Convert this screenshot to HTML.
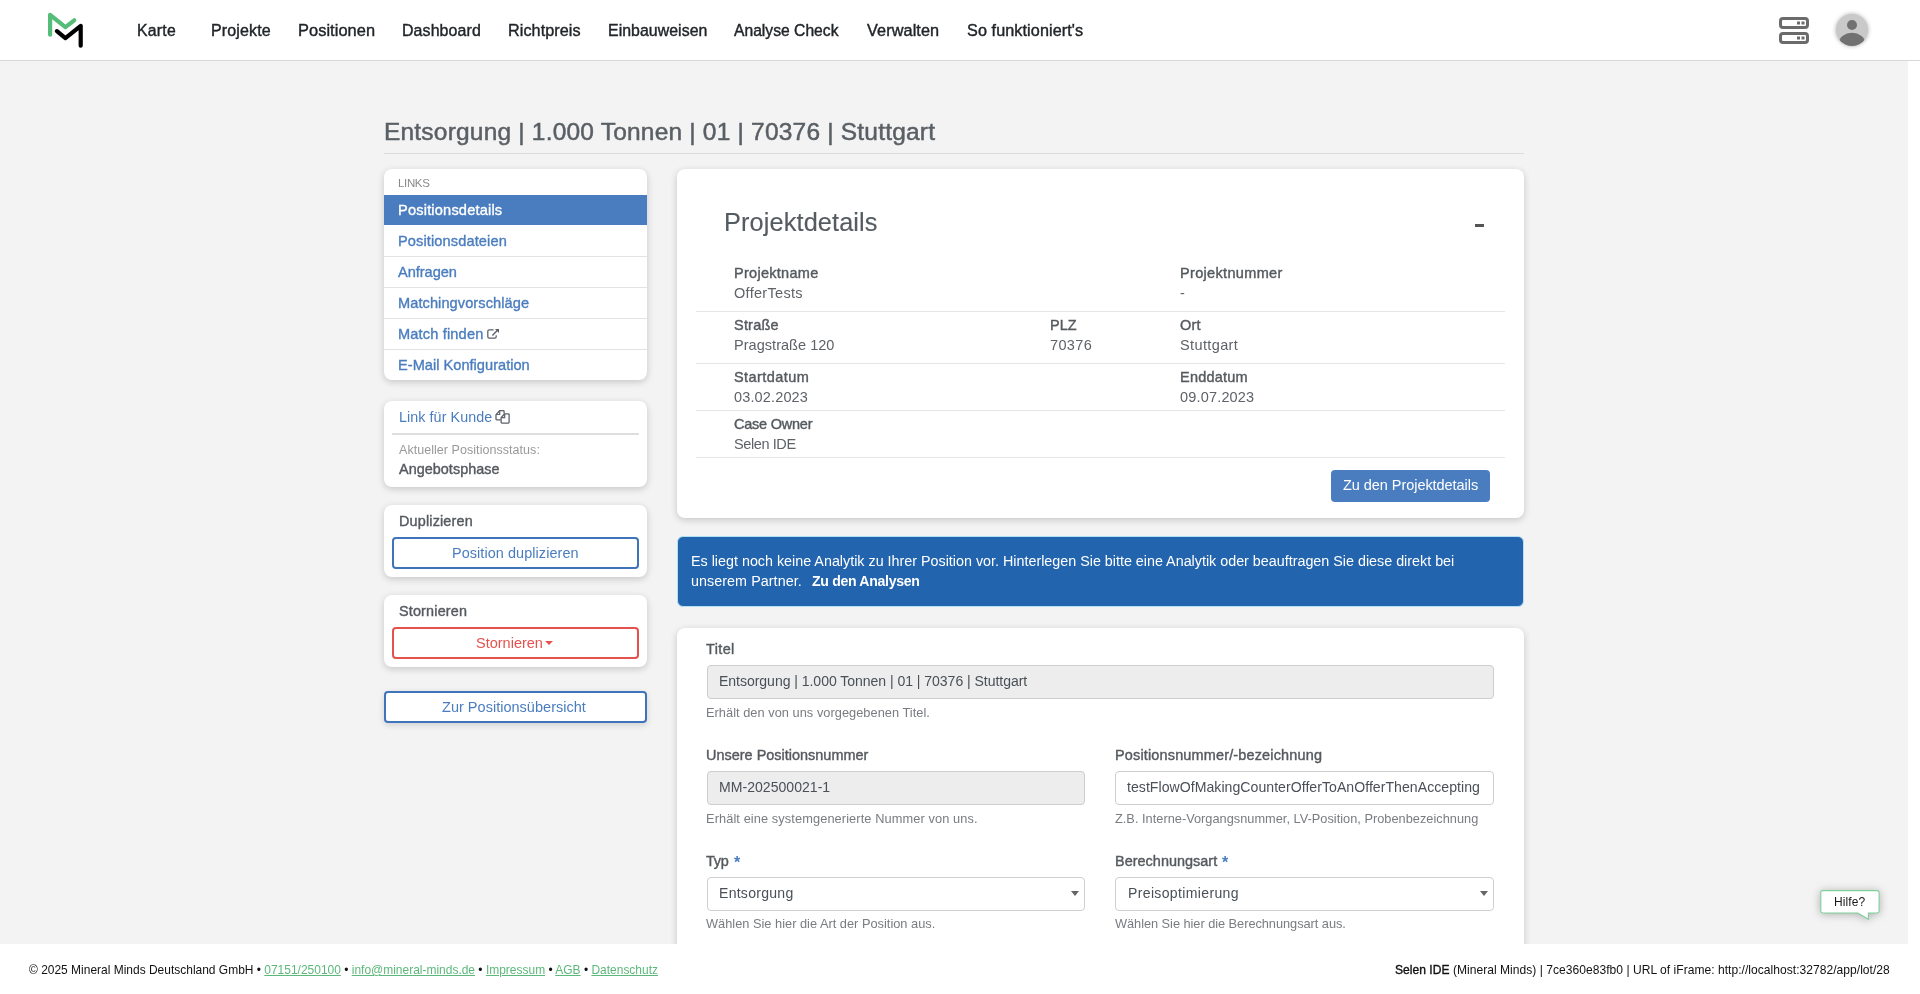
<!DOCTYPE html>
<html><head><meta charset="utf-8"><title>Positionsdetails</title>
<style>
html,body{margin:0;padding:0;width:1920px;height:994px;overflow:hidden;background:#fff;}
body{position:relative;font-family:"Liberation Sans",sans-serif;}
.r{position:absolute;}
.t{position:absolute;white-space:nowrap;line-height:1;will-change:transform;}
.b{display:inline-block;width:0;height:0;}
.t a{color:#5cb87a;text-decoration:underline;}
</style></head><body>
<div class="r" style="left:0px;top:0px;width:1920px;height:60px;background:#fff;"></div>
<div class="r" style="left:0px;top:60px;width:1920px;height:1px;background:#d8d8d8;"></div>
<svg class="r" style="left:40px;top:5px" width="60" height="50" viewBox="40 5 60 50">
<polyline points="50.1,34.7 50.1,14.8 65.4,27.1 74.2,20.3" fill="none" stroke="#55bd78" stroke-width="4.2" stroke-linecap="round" stroke-linejoin="round"/>
<polyline points="56.9,31.2 65.4,38.2 80.7,25.9 80.7,45.7" fill="none" stroke="#000" stroke-width="4.2" stroke-linecap="round" stroke-linejoin="round"/>
</svg>
<div class="t" id="t0" style="left:137.35px;top:23.01px;font-size:15.800px;color:#212529;letter-spacing:0.246px;-webkit-text-stroke:0.4px #212529;">Karte<i class="b"></i></div>
<div class="t" id="t1" style="left:210.60px;top:22.00px;font-size:16.050px;color:#212529;letter-spacing:0.122px;-webkit-text-stroke:0.4px #212529;">Projekte<i class="b"></i></div>
<div class="t" id="t2" style="left:297.80px;top:22.01px;font-size:16.400px;color:#212529;letter-spacing:0.054px;-webkit-text-stroke:0.4px #212529;">Positionen<i class="b"></i></div>
<div class="t" id="t3" style="left:401.90px;top:23.01px;font-size:15.950px;color:#212529;letter-spacing:0.098px;-webkit-text-stroke:0.4px #212529;">Dashboard<i class="b"></i></div>
<div class="t" id="t4" style="left:507.80px;top:22.01px;font-size:16.200px;color:#212529;letter-spacing:0.067px;-webkit-text-stroke:0.4px #212529;">Richtpreis<i class="b"></i></div>
<div class="t" id="t5" style="left:607.80px;top:23.00px;font-size:15.880px;color:#212529;letter-spacing:0.046px;-webkit-text-stroke:0.4px #212529;">Einbauweisen<i class="b"></i></div>
<div class="t" id="t6" style="left:734.40px;top:23.01px;font-size:15.650px;color:#212529;letter-spacing:0.011px;-webkit-text-stroke:0.4px #212529;">Analyse Check<i class="b"></i></div>
<div class="t" id="t7" style="left:867.35px;top:22.00px;font-size:16.300px;color:#212529;letter-spacing:0.083px;-webkit-text-stroke:0.4px #212529;">Verwalten<i class="b"></i></div>
<div class="t" id="t8" style="left:967.35px;top:22.01px;font-size:16.200px;color:#212529;letter-spacing:0.089px;-webkit-text-stroke:0.4px #212529;">So funktioniert&#x27;s<i class="b"></i></div>
<svg class="r" style="left:1770px;top:10px" width="50" height="40" viewBox="1770 10 50 40">
<rect x="1780.5" y="18.5" width="27" height="9" rx="2.5" fill="none" stroke="#6b6b6b" stroke-width="3"/>
<rect x="1780.5" y="33.5" width="27" height="9" rx="2.5" fill="none" stroke="#6b6b6b" stroke-width="3"/>
<rect x="1797" y="21.5" width="3" height="3" fill="#6b6b6b"/><rect x="1801.5" y="21.5" width="3" height="3" fill="#6b6b6b"/>
<rect x="1797" y="36.5" width="3" height="3" fill="#6b6b6b"/><rect x="1801.5" y="36.5" width="3" height="3" fill="#6b6b6b"/>
</svg>
<div class="r" style="left:1836px;top:14px;width:32px;height:32px;border-radius:50%;box-shadow:0 0 4px rgba(0,0,0,0.35);background:#c9c9c9;overflow:hidden">
<svg width="32" height="32" viewBox="0 0 32 32"><circle cx="16" cy="11" r="5" fill="#717171"/><ellipse cx="16" cy="28.5" rx="13" ry="9.7" fill="#717171"/></svg></div>
<div class="r" style="left:0px;top:61px;width:1908px;height:883px;background:#f3f3f3;overflow:hidden;"></div>
<div class="t" id="t9" style="left:383.60px;top:120.00px;font-size:24.500px;color:#595f64;letter-spacing:0.198px;-webkit-text-stroke:0.5px #595f64;">Entsorgung | 1.000 Tonnen | 01 | 70376 | Stuttgart<i class="b"></i></div>
<div class="r" style="left:384px;top:153px;width:1140px;height:1px;background:#dcdcdc;"></div>
<div class="r" style="left:384px;top:169px;width:263px;height:211px;background:#fff;border-radius:8px;box-shadow:0 2px 7px rgba(0,0,0,0.19);"></div>
<div class="t" id="t10" style="left:398.20px;top:178.01px;font-size:11.500px;color:#8a8a8a;letter-spacing:-0.342px;">LINKS<i class="b"></i></div>
<div class="r" style="left:384px;top:195px;width:263px;height:30px;background:#4a7dbf;"></div>
<div class="t" id="t11" style="left:398.00px;top:203.00px;font-size:14.600px;color:#fff;letter-spacing:0.184px;-webkit-text-stroke:0.35px #fff;">Positionsdetails<i class="b"></i></div>
<div class="t" id="t12" style="left:398.00px;top:234.00px;font-size:14.600px;color:#4a7dbf;letter-spacing:0.114px;-webkit-text-stroke:0.35px #4a7dbf;">Positionsdateien<i class="b"></i></div>
<div class="r" style="left:384px;top:256px;width:263px;height:1px;background:#e3e3e3;"></div>
<div class="t" id="t13" style="left:398.00px;top:265.00px;font-size:14.600px;color:#4a7dbf;letter-spacing:-0.045px;-webkit-text-stroke:0.35px #4a7dbf;">Anfragen<i class="b"></i></div>
<div class="r" style="left:384px;top:287px;width:263px;height:1px;background:#e3e3e3;"></div>
<div class="t" id="t14" style="left:398.00px;top:296.00px;font-size:14.600px;color:#4a7dbf;letter-spacing:0.074px;-webkit-text-stroke:0.35px #4a7dbf;">Matchingvorschläge<i class="b"></i></div>
<div class="r" style="left:384px;top:318px;width:263px;height:1px;background:#e3e3e3;"></div>
<div class="t" id="t15" style="left:398.00px;top:327.00px;font-size:14.600px;color:#4a7dbf;letter-spacing:0.156px;-webkit-text-stroke:0.35px #4a7dbf;">Match finden<i class="b"></i></div>
<div class="r" style="left:384px;top:349px;width:263px;height:1px;background:#e3e3e3;"></div>
<div class="t" id="t16" style="left:398.00px;top:358.00px;font-size:14.600px;color:#4a7dbf;letter-spacing:0.017px;-webkit-text-stroke:0.35px #4a7dbf;">E-Mail Konfiguration<i class="b"></i></div>
<svg class="r" style="left:480px;top:320px" width="30" height="30" viewBox="480 320 30 30">
<path d="M493.6 329.8H489.2Q487.8 329.8 487.8 331.2V336.8Q487.8 338.2 489.2 338.2H494.8Q496.2 338.2 496.2 336.8V335.2" fill="none" stroke="#5b6167" stroke-width="1.25"/>
<path d="M492.4 335.4L497.2 330.6" fill="none" stroke="#5b6167" stroke-width="1.4"/>
<path d="M495 328.9H499V332.9Z" fill="#5b6167"/></svg>
<div class="r" style="left:384px;top:401px;width:263px;height:86px;background:#fff;border-radius:8px;box-shadow:0 2px 7px rgba(0,0,0,0.19);"></div>
<div class="t" id="t17" style="left:399.40px;top:410.01px;font-size:14.300px;color:#4a7dbf;letter-spacing:0.074px;">Link für Kunde<i class="b"></i></div>
<svg class="r" style="left:490px;top:405px" width="28" height="24" viewBox="490 405 28 24">
<path d="M500.6 419.9H496.8Q496 419.9 496 419.1V414.6L499.6 410.7H503.3Q504.1 410.7 504.1 411.5V413.6" fill="none" stroke="#5b6167" stroke-width="1.3" stroke-linejoin="round"/>
<path d="M496.2 414.5H499.7V410.8" fill="none" stroke="#5b6167" stroke-width="1.2"/>
<path d="M504.6 413.8H508.3Q509.1 413.8 509.1 414.6V422.3Q509.1 423.1 508.3 423.1H501.9Q501.1 423.1 501.1 422.3V417.7Z" fill="none" stroke="#5b6167" stroke-width="1.3" stroke-linejoin="round"/>
<path d="M501.3 417.6H504.7V413.9" fill="none" stroke="#5b6167" stroke-width="1.2"/></svg>
<div class="r" style="left:392px;top:433px;width:247px;height:2px;background:#dedede;"></div>
<div class="t" id="t18" style="left:398.90px;top:444.01px;font-size:12.500px;color:#999;letter-spacing:0.049px;">Aktueller Positionsstatus:<i class="b"></i></div>
<div class="t" id="t19" style="left:399.00px;top:462.01px;font-size:14.400px;color:#555a5e;letter-spacing:0.043px;-webkit-text-stroke:0.4px #555a5e;">Angebotsphase<i class="b"></i></div>
<div class="r" style="left:384px;top:505px;width:263px;height:72px;background:#fff;border-radius:8px;box-shadow:0 2px 7px rgba(0,0,0,0.19);"></div>
<div class="t" id="t20" style="left:399.20px;top:514.01px;font-size:14.400px;color:#555a5e;letter-spacing:0.168px;-webkit-text-stroke:0.4px #555a5e;">Duplizieren<i class="b"></i></div>
<div class="r" style="left:392px;top:537px;width:247px;height:32px;box-sizing:border-box;border:2px solid #3f74ba;border-radius:4px;background:#fff;"></div>
<div class="t" id="t21" style="left:451.60px;top:546.01px;font-size:14.450px;color:#4a7dbf;letter-spacing:0.070px;">Position duplizieren<i class="b"></i></div>
<div class="r" style="left:384px;top:595px;width:263px;height:72px;background:#fff;border-radius:8px;box-shadow:0 2px 7px rgba(0,0,0,0.19);"></div>
<div class="t" id="t22" style="left:399.20px;top:604.01px;font-size:14.400px;color:#555a5e;letter-spacing:0.174px;-webkit-text-stroke:0.4px #555a5e;">Stornieren<i class="b"></i></div>
<div class="r" style="left:392px;top:627px;width:247px;height:32px;box-sizing:border-box;border:2px solid #e5524d;border-radius:4px;background:#fff;"></div>
<div class="t" id="t23" style="left:476.40px;top:636.00px;font-size:14.500px;color:#e5524d;">Stornieren<i class="b"></i></div>
<div class="r" style="left:545.3px;top:641px;width:0;height:0;border-left:4px solid transparent;border-right:4px solid transparent;border-top:4px solid #e5524d"></div>
<div class="r" style="left:384px;top:691px;width:263px;height:32px;box-sizing:border-box;border:2px solid #3f74ba;border-radius:4px;background:#fff;box-shadow:0 2px 6px rgba(0,0,0,0.15);"></div>
<div class="t" id="t24" style="left:442.10px;top:700.00px;font-size:14.500px;color:#4a7dbf;letter-spacing:0.020px;">Zur Positionsübersicht<i class="b"></i></div>
<div class="r" style="left:677px;top:169px;width:847px;height:349px;background:#fff;border-radius:8px;box-shadow:0 2px 7px rgba(0,0,0,0.19);"></div>
<div class="t" id="t25" style="left:723.90px;top:210.00px;font-size:25.300px;color:#555c61;letter-spacing:0.128px;-webkit-text-stroke:0.15px #555c61;">Projektdetails<i class="b"></i></div>
<div class="r" style="left:1475px;top:224px;width:9px;height:3px;background:#555;"></div>
<div class="t" id="t26" style="left:734.00px;top:266.01px;font-size:14.500px;color:#555a5e;letter-spacing:0.285px;-webkit-text-stroke:0.4px #555a5e;">Projektname<i class="b"></i></div>
<div class="t" id="t27" style="left:734.30px;top:286.01px;font-size:14.500px;color:#5f6368;letter-spacing:0.307px;">OfferTests<i class="b"></i></div>
<div class="t" id="t28" style="left:1179.50px;top:266.01px;font-size:14.500px;color:#555a5e;letter-spacing:0.332px;-webkit-text-stroke:0.4px #555a5e;">Projektnummer<i class="b"></i></div>
<div class="t" id="t29" style="left:1179.80px;top:286.01px;font-size:14.500px;color:#5f6368;letter-spacing:0.164px;">-<i class="b"></i></div>
<div class="r" style="left:696px;top:311px;width:809px;height:1px;background:#e6e6e6;"></div>
<div class="t" id="t30" style="left:734.00px;top:318.01px;font-size:14.500px;color:#555a5e;letter-spacing:0.210px;-webkit-text-stroke:0.4px #555a5e;">Straße<i class="b"></i></div>
<div class="t" id="t31" style="left:734.30px;top:338.01px;font-size:14.500px;color:#5f6368;letter-spacing:0.038px;">Pragstraße 120<i class="b"></i></div>
<div class="t" id="t32" style="left:1049.50px;top:318.01px;font-size:14.500px;color:#555a5e;letter-spacing:0.030px;-webkit-text-stroke:0.4px #555a5e;">PLZ<i class="b"></i></div>
<div class="t" id="t33" style="left:1049.80px;top:338.01px;font-size:14.500px;color:#5f6368;letter-spacing:0.356px;">70376<i class="b"></i></div>
<div class="t" id="t34" style="left:1179.50px;top:318.01px;font-size:14.500px;color:#555a5e;letter-spacing:0.220px;-webkit-text-stroke:0.4px #555a5e;">Ort<i class="b"></i></div>
<div class="t" id="t35" style="left:1179.80px;top:338.01px;font-size:14.500px;color:#5f6368;letter-spacing:0.375px;">Stuttgart<i class="b"></i></div>
<div class="r" style="left:696px;top:363px;width:809px;height:1px;background:#e6e6e6;"></div>
<div class="t" id="t36" style="left:734.00px;top:370.00px;font-size:14.500px;color:#555a5e;letter-spacing:0.430px;-webkit-text-stroke:0.4px #555a5e;">Startdatum<i class="b"></i></div>
<div class="t" id="t37" style="left:734.30px;top:390.01px;font-size:14.500px;color:#5f6368;letter-spacing:0.143px;">03.02.2023<i class="b"></i></div>
<div class="t" id="t38" style="left:1179.50px;top:370.00px;font-size:14.500px;color:#555a5e;letter-spacing:0.206px;-webkit-text-stroke:0.4px #555a5e;">Enddatum<i class="b"></i></div>
<div class="t" id="t39" style="left:1179.80px;top:390.01px;font-size:14.500px;color:#5f6368;letter-spacing:0.178px;">09.07.2023<i class="b"></i></div>
<div class="r" style="left:696px;top:410px;width:809px;height:1px;background:#e6e6e6;"></div>
<div class="t" id="t40" style="left:734.00px;top:417.01px;font-size:14.500px;color:#555a5e;letter-spacing:-0.231px;-webkit-text-stroke:0.4px #555a5e;">Case Owner<i class="b"></i></div>
<div class="t" id="t41" style="left:734.30px;top:437.00px;font-size:14.500px;color:#5f6368;letter-spacing:-0.404px;">Selen IDE<i class="b"></i></div>
<div class="r" style="left:696px;top:457px;width:809px;height:1px;background:#e6e6e6;"></div>
<div class="r" style="left:1331px;top:470px;width:159px;height:32px;background:#4a7dbf;border-radius:4px;"></div>
<div class="t" id="t42" style="left:1342.90px;top:478.00px;font-size:14.500px;color:#fff;letter-spacing:-0.051px;">Zu den Projektdetails<i class="b"></i></div>
<div class="r" style="left:677px;top:536px;width:847px;height:71px;box-sizing:border-box;background:#2264ae;border:1px solid #b3e0f3;border-radius:6px;"></div>
<div class="t" id="t43" style="left:691.40px;top:554.01px;font-size:14.320px;color:#fff;letter-spacing:0.002px;">Es liegt noch keine Analytik zu Ihrer Position vor. Hinterlegen Sie bitte eine Analytik oder beauftragen Sie diese direkt bei<i class="b"></i></div>
<div class="t" id="t44" style="left:691.40px;top:574.00px;font-size:14.320px;color:#fff;letter-spacing:0.060px;">unserem Partner.<i class="b"></i></div>
<div class="t" id="t45" style="left:812.20px;top:574.00px;font-size:14.100px;color:#fff;letter-spacing:-0.316px;font-weight:700;">Zu den Analysen<i class="b"></i></div>
<div class="r" style="left:677px;top:628px;width:847px;height:400px;background:#fff;border-radius:8px;box-shadow:0 2px 7px rgba(0,0,0,0.19);"></div>
<div class="t" id="t46" style="left:706.10px;top:642.01px;font-size:14.450px;color:#555a5e;letter-spacing:0.379px;-webkit-text-stroke:0.4px #555a5e;">Titel<i class="b"></i></div>
<div class="r" style="left:707px;top:665px;width:787px;height:34px;box-sizing:border-box;background:#ededed;border:1px solid #cdcdcd;border-radius:4px;"></div>
<div class="t" id="t47" style="left:719.40px;top:674.01px;font-size:14.050px;color:#495057;letter-spacing:-0.043px;">Entsorgung | 1.000 Tonnen | 01 | 70376 | Stuttgart<i class="b"></i></div>
<div class="t" id="t48" style="left:706.40px;top:707.00px;font-size:12.800px;color:#797c80;letter-spacing:0.033px;">Erhält den von uns vorgegebenen Titel.<i class="b"></i></div>
<div class="t" id="t49" style="left:706.10px;top:748.00px;font-size:14.450px;color:#555a5e;letter-spacing:0.011px;-webkit-text-stroke:0.4px #555a5e;">Unsere Positionsnummer<i class="b"></i></div>
<div class="r" style="left:707px;top:771px;width:378px;height:34px;box-sizing:border-box;background:#ededed;border:1px solid #cdcdcd;border-radius:4px;"></div>
<div class="t" id="t50" style="left:719.40px;top:780.00px;font-size:14.050px;color:#495057;letter-spacing:0.023px;">MM-202500021-1<i class="b"></i></div>
<div class="t" id="t51" style="left:706.40px;top:813.01px;font-size:12.800px;color:#797c80;letter-spacing:0.095px;">Erhält eine systemgenerierte Nummer von uns.<i class="b"></i></div>
<div class="t" id="t52" style="left:1114.70px;top:748.00px;font-size:14.450px;color:#555a5e;letter-spacing:0.174px;-webkit-text-stroke:0.4px #555a5e;">Positionsnummer/-bezeichnung<i class="b"></i></div>
<div class="r" style="left:1115px;top:771px;width:379px;height:34px;box-sizing:border-box;background:#fff;border:1px solid #cfcfcf;border-radius:4px;"></div>
<div class="t" id="t53" style="left:1127.40px;top:780.01px;font-size:14.100px;color:#495057;letter-spacing:0.034px;">testFlowOfMakingCounterOfferToAnOfferThenAccepting<i class="b"></i></div>
<div class="t" id="t54" style="left:1114.80px;top:813.01px;font-size:12.770px;color:#797c80;letter-spacing:0.015px;">Z.B. Interne-Vorgangsnummer, LV-Position, Probenbezeichnung<i class="b"></i></div>
<div class="t" id="t55" style="left:706.10px;top:854.00px;font-size:14.450px;color:#555a5e;letter-spacing:-0.208px;-webkit-text-stroke:0.4px #555a5e;">Typ<i class="b"></i></div>
<div class="t" id="t56" style="left:733.90px;top:855.01px;font-size:16.000px;color:#4a7dbf;font-weight:700;">*<i class="b"></i></div>
<div class="r" style="left:707px;top:877px;width:378px;height:34px;box-sizing:border-box;background:#fff;border:1px solid #cfcfcf;border-radius:4px;"></div>
<div class="t" id="t57" style="left:719.40px;top:886.00px;font-size:14.050px;color:#495057;letter-spacing:0.262px;">Entsorgung<i class="b"></i></div>
<div class="r" style="left:1071px;top:891px;width:0;height:0;border-left:4px solid transparent;border-right:4px solid transparent;border-top:5px solid #666"></div>
<div class="t" id="t58" style="left:706.40px;top:918.01px;font-size:12.800px;color:#797c80;letter-spacing:0.005px;">Wählen Sie hier die Art der Position aus.<i class="b"></i></div>
<div class="t" id="t59" style="left:1114.70px;top:854.00px;font-size:14.450px;color:#555a5e;letter-spacing:0.022px;-webkit-text-stroke:0.4px #555a5e;">Berechnungsart<i class="b"></i></div>
<div class="t" id="t60" style="left:1221.90px;top:855.01px;font-size:16.000px;color:#4a7dbf;font-weight:700;">*<i class="b"></i></div>
<div class="r" style="left:1115px;top:877px;width:379px;height:34px;box-sizing:border-box;background:#fff;border:1px solid #cfcfcf;border-radius:4px;"></div>
<div class="t" id="t61" style="left:1127.90px;top:886.00px;font-size:14.050px;color:#495057;letter-spacing:0.343px;">Preisoptimierung<i class="b"></i></div>
<div class="r" style="left:1480px;top:891px;width:0;height:0;border-left:4px solid transparent;border-right:4px solid transparent;border-top:5px solid #666"></div>
<div class="t" id="t62" style="left:1115.00px;top:918.01px;font-size:12.800px;color:#797c80;letter-spacing:-0.046px;">Wählen Sie hier die Berechnungsart aus.<i class="b"></i></div>
<svg class="r" style="left:1800px;top:870px;filter:drop-shadow(0 1px 4px rgba(0,0,0,0.28))" width="100" height="70" viewBox="1800 870 100 70">
<path d="M1822.7 890.6H1877.2Q1879.1 890.6 1879.1 892.5V911.1Q1879.1 913 1877.2 913H1868.4V919.3L1857.9 913H1822.7Q1820.8 913 1820.8 911.1V892.5Q1820.8 890.6 1822.7 890.6Z" fill="#fff" stroke="#7fcf9b" stroke-width="1.1"/></svg>
<div class="t" id="t63" style="left:1834.40px;top:896.01px;font-size:12.000px;color:#1a1a1a;letter-spacing:0.091px;">Hilfe?<i class="b"></i></div>
<div class="r" style="left:0px;top:944px;width:1920px;height:50px;background:#fff;"></div>
<div class="t" id="t64" style="left:28.90px;top:965.01px;font-size:11.960px;color:#111;letter-spacing:0.010px;">© 2025 Mineral Minds Deutschland GmbH • <a>07151/250100</a> • <a>info@mineral-minds.de</a> • <a>Impressum</a> • <a>AGB</a> • <a>Datenschutz</a><i class="b"></i></div>
<div class="t" id="t65" style="left:1394.90px;top:964.01px;font-size:12.050px;color:#111;letter-spacing:0.031px;"><span style="-webkit-text-stroke:0.35px #111">Selen IDE</span> (Mineral Minds) | 7ce360e83fb0 | URL of iFrame: http://localhost:32782/app/lot/28<i class="b"></i></div>
</body></html>
